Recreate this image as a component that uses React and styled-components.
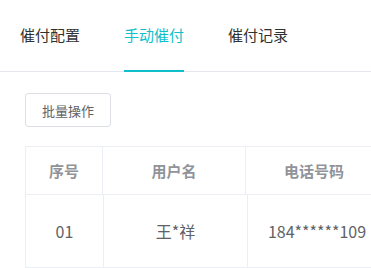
import React from "react";
import styled, { createGlobalStyle } from "styled-components";

const GlobalStyle = createGlobalStyle`
  body {
    margin: 0;
    background: #fff;
    font-family: "Noto Sans CJK SC", "Noto Sans", sans-serif;
    overflow: hidden;
  }
`;

const ACTIVE = "#0fc0cc";
const LINE = "#ebeef5";

const Page = styled.div`
  width: 371px;
  height: 268px;
  overflow: hidden;
`;

const TabBar = styled.div`
  display: flex;
  gap: 44px;
  height: 71px;
  padding-left: 20px;
  border-bottom: 1px solid #e4e7ed;
`;

const Tab = styled.div`
  display: flex;
  align-items: center;
  padding-bottom: 1px;
  font-size: 15px;
  color: ${(p) => (p.$active ? ACTIVE : "#303133")};
  border-bottom: 2px solid ${(p) => (p.$active ? ACTIVE : "transparent")};
  box-sizing: border-box;
  height: 72px;
  white-space: nowrap;
`;

const Content = styled.div`
  padding: 21px 0 0 25px;
`;

const Button = styled.button`
  width: 86px;
  height: 34px;
  border: 1px solid #dcdfe6;
  border-radius: 3px;
  background: #fff;
  color: #606266;
  font-family: inherit;
  font-size: 13px;
  padding: 0;
  cursor: pointer;
`;

const Table = styled.div`
  margin-top: 19px;
  width: 380px;
  border-top: 1px solid ${LINE};
  border-left: 1px solid ${LINE};
`;

const Row = styled.div`
  display: grid;
  grid-template-columns: ${(p) => p.$cols};
  height: ${(p) => p.$h}px;
  border-bottom: 1px solid ${LINE};
`;

const Cell = styled.div`
  display: flex;
  align-items: center;
  justify-content: center;
  border-right: 1px solid ${LINE};
  font-size: ${(p) => (p.$head ? 15 : 16)}px;
  font-weight: ${(p) => (p.$head ? 700 : 400)};
  color: ${(p) => (p.$head ? "#909399" : "#606266")};
  white-space: nowrap;
`;

export default function App() {
  return (
    <Page>
      <GlobalStyle />
      <TabBar>
        <Tab>催付配置</Tab>
        <Tab $active>手动催付</Tab>
        <Tab>催付记录</Tab>
      </TabBar>
      <Content>
        <Button>批量操作</Button>
        <Table>
          <Row $cols="77px 143px 137px" $h={47}>
            <Cell $head>序号</Cell>
            <Cell $head>用户名</Cell>
            <Cell $head>电话号码</Cell>
          </Row>
          <Row $cols="78px 144px 139px" $h={72}>
            <Cell>01</Cell>
            <Cell>王*祥</Cell>
            <Cell>184******109</Cell>
          </Row>
        </Table>
      </Content>
    </Page>
  );
}
